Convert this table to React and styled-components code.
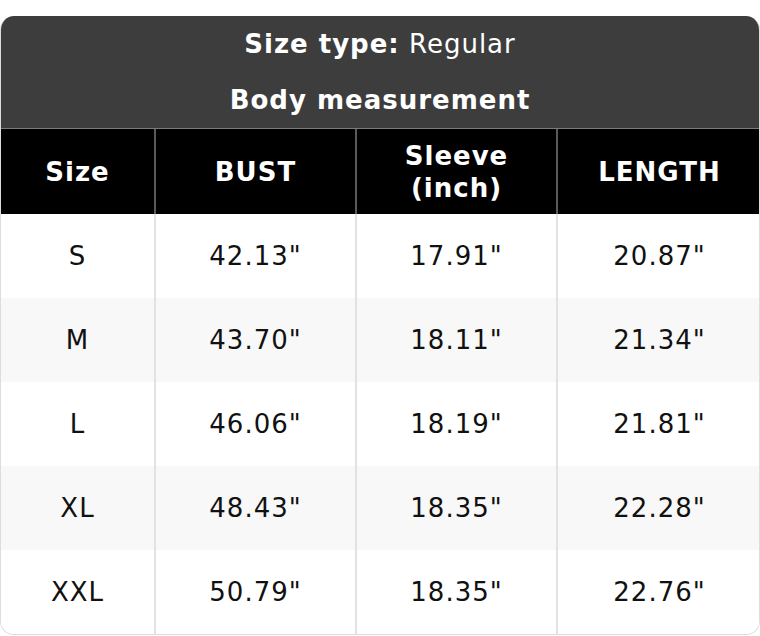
import React from "react";
import styled, { createGlobalStyle } from "styled-components";

const GlobalStyle = createGlobalStyle`
  body {
    margin: 0;
    background: #ffffff;
    font-family: "DejaVu Sans", "Liberation Sans", sans-serif;
  }
`;

const Page = styled.div`
  padding-top: 16px;
`;

const Card = styled.div`
  border: 1px solid #dddddd;
  border-top: none;
  border-radius: 14px;
  overflow: hidden;
  background: #ffffff;
  letter-spacing: 1px;
`;

const TitleBox = styled.div`
  background: #3d3d3d;
  color: #ffffff;
  font-size: 26px;
  text-align: center;
  border-bottom: 1px solid #7a7a7a;
`;

const TitleLine = styled.div`
  height: 56px;
  display: flex;
  align-items: center;
  justify-content: center;
  font-weight: ${(p) => (p.bold ? "bold" : "normal")};
`;

const Table = styled.table`
  width: 100%;
  border-collapse: collapse;
  table-layout: fixed;
`;

const HeadCell = styled.th`
  background: #000000;
  color: #ffffff;
  font-size: 26px;
  font-weight: bold;
  line-height: 32px;
  height: 85px;
  padding: 0;
  text-align: center;
  border-left: 2px solid #5a5a5a;
  &:first-child {
    border-left: none;
  }
`;

const Row = styled.tr`
  background: ${(p) => (p.striped ? "#f8f8f8" : "#ffffff")};
`;

const Cell = styled.td`
  height: 84px;
  padding: 0;
  font-size: 26px;
  color: #111111;
  text-align: center;
  border-left: 2px solid #e2e2e2;
  &:first-child {
    border-left: none;
  }
`;

const columns = ["Size", "BUST", "Sleeve\n(inch)", "LENGTH"];
const widths = [154, 201, 201, 204];

const rows = [
  ["S", '42.13"', '17.91"', '20.87"'],
  ["M", '43.70"', '18.11"', '21.34"'],
  ["L", '46.06"', '18.19"', '21.81"'],
  ["XL", '48.43"', '18.35"', '22.28"'],
  ["XXL", '50.79"', '18.35"', '22.76"'],
];

export default function App() {
  return (
    <Page>
      <GlobalStyle />
      <Card>
        <TitleBox>
          <TitleLine>
            <span>
              <b>Size type:</b> Regular
            </span>
          </TitleLine>
          <TitleLine bold>Body measurement</TitleLine>
        </TitleBox>
        <Table>
          <colgroup>
            {widths.map((w, i) => (
              <col key={i} style={{ width: w }} />
            ))}
          </colgroup>
          <thead>
            <tr>
              {columns.map((c) => (
                <HeadCell key={c}>
                  {c.split("\n").map((part, i) => (
                    <div key={i}>{part}</div>
                  ))}
                </HeadCell>
              ))}
            </tr>
          </thead>
          <tbody>
            {rows.map((r, i) => (
              <Row key={r[0]} striped={i % 2 === 1}>
                {r.map((v, j) => (
                  <Cell key={j}>{v}</Cell>
                ))}
              </Row>
            ))}
          </tbody>
        </Table>
      </Card>
    </Page>
  );
}
